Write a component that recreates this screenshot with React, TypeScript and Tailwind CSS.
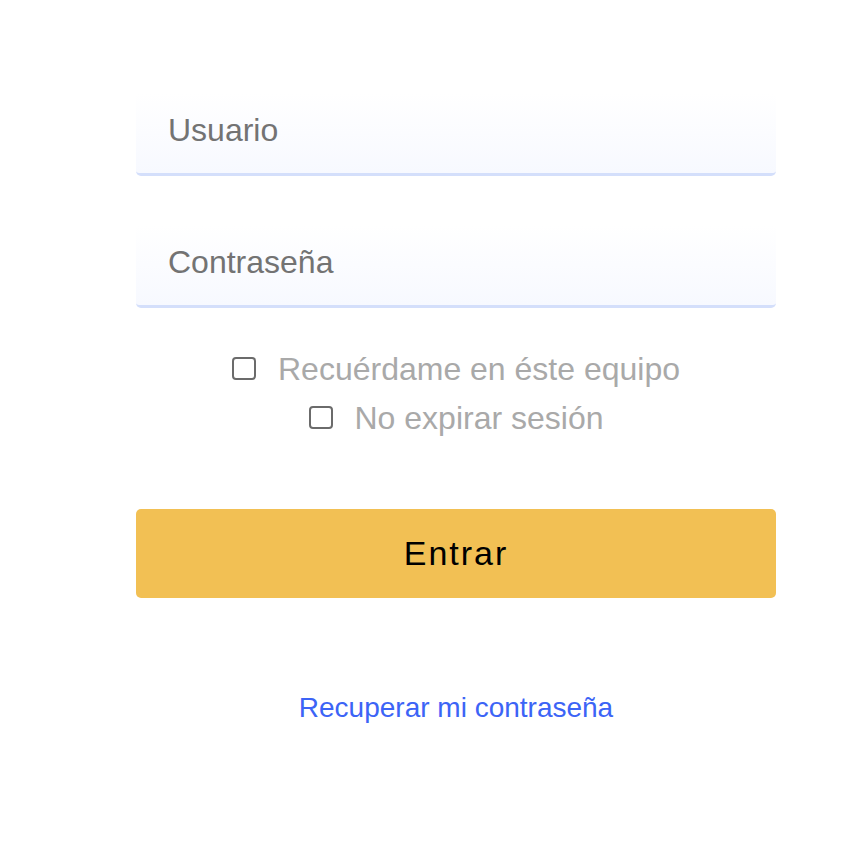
export default function App() {
  return (
    <div className="min-h-screen bg-white" style={{ fontFamily: '"Liberation Sans", Arial, sans-serif' }}>
      <div className="ml-[136px] w-[640px] pt-[93px]">
        <div className="flex h-[83px] items-center rounded-[5px] border-b-[3px] border-[#d4dffb] bg-gradient-to-b from-white to-[#f7f9ff] px-8 pb-[6px]">
          <span className="text-[32px] text-[#737373]">Usuario</span>
        </div>

        <div className="mt-[49px] flex h-[83px] items-center rounded-[5px] border-b-[3px] border-[#d4dffb] bg-gradient-to-b from-white to-[#f7f9ff] px-8 pb-[6px]">
          <span className="text-[32px] text-[#737373]">Contraseña</span>
        </div>

        <div className="mt-[36px] flex flex-col items-center">
          <label className="flex h-[49px] items-center gap-[22px] text-[32px] text-[#a9a9a9]">
            <span className="h-[23px] w-[24px] rounded-[4px] border-2 border-[#6b6b6b] bg-white" />
            Recuérdame en éste equipo
          </label>
          <label className="flex h-[49px] items-center gap-[22px] text-[32px] text-[#a9a9a9]">
            <span className="h-[23px] w-[24px] rounded-[4px] border-2 border-[#6b6b6b] bg-white" />
            No expirar sesión
          </label>
        </div>

        <button className="mt-[67px] flex h-[89px] w-full items-center justify-center rounded-[5px] bg-[#f2c054] text-[34px] tracking-[2px] text-black">
          Entrar
        </button>

        <div className="mt-[89px] text-center">
          <a href="#" className="text-[28px] text-[#3c64f6]">
            Recuperar mi contraseña
          </a>
        </div>
      </div>
    </div>
  )
}
